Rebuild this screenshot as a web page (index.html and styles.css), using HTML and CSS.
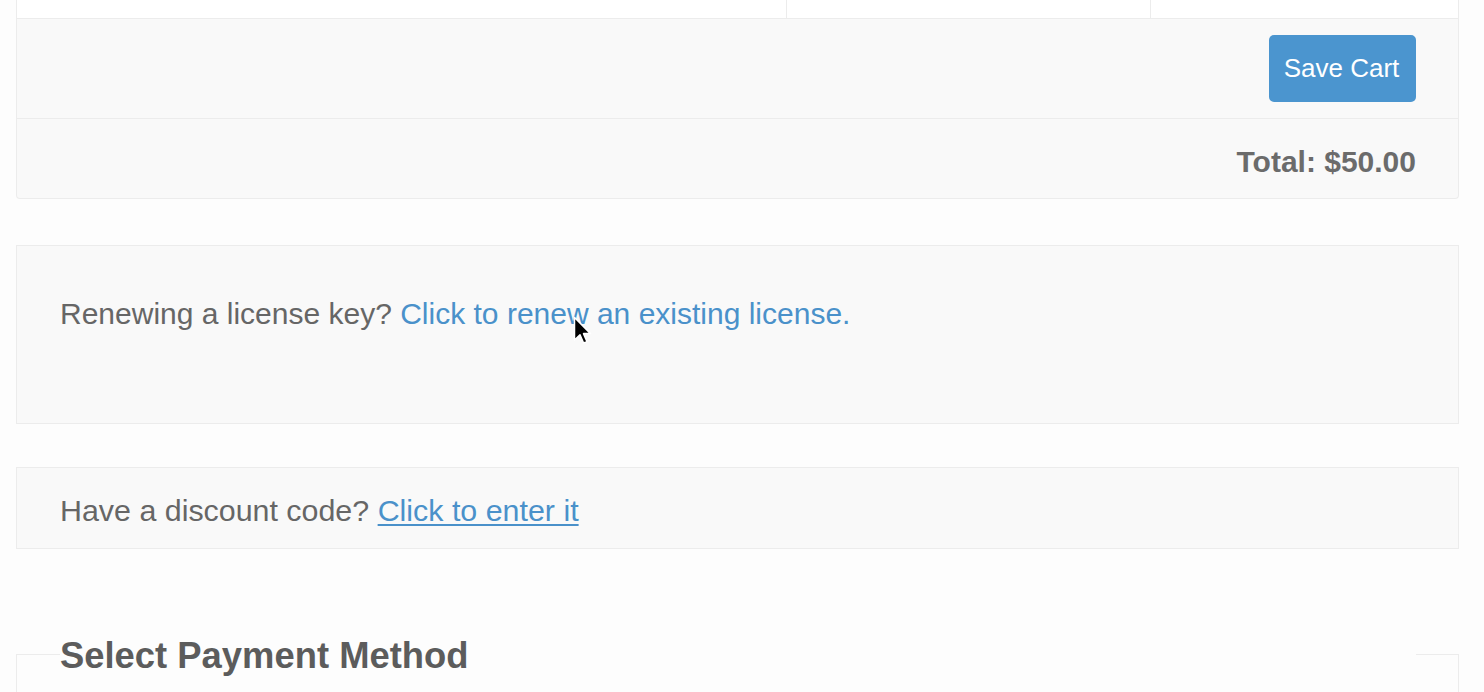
FILE: index.html
```html
<!DOCTYPE html>
<html lang="en">
<head>
<meta charset="utf-8">
<title>Checkout</title>
<link rel="stylesheet" href="styles.css">
</head>
<body>
<div class="page">
  <div class="cart">
    <div class="cart-row cart-items">
      <div class="cell"></div>
      <div class="cell"></div>
      <div class="cell last"></div>
    </div>
    <div class="cart-row cart-actions">
      <button class="btn-save" type="button">Save Cart</button>
    </div>
    <div class="cart-row cart-total">Total: $50.00</div>
  </div>

  <div class="notice notice-renew">
    <p class="notice-text">Renewing a license key? <a class="link" href="#">Click to renew an existing license.</a></p>
  </div>

  <div class="notice notice-discount">
    <p class="notice-text">Have a discount code? <a class="link link-underline" href="#">Click to enter it</a></p>
  </div>

  <fieldset class="payment">
    <legend class="payment-title">Select Payment Method</legend>
  </fieldset>
</div>

<svg class="cursor" width="20" height="32" viewBox="0 0 20 32" aria-hidden="true">
  <path d="M1.5 1.5 L1.5 24 L7 18.8 L10.6 27 L14 25.6 L10.5 17.6 L17.5 17.6 Z" fill="#000" stroke="#fff" stroke-width="1.5" stroke-linejoin="round"/>
</svg>
</body>
</html>
```

FILE: styles.css
```css
html, body {
  margin: 0;
  padding: 0;
}
body {
  background: #fdfdfd;
  font-family: "Liberation Sans", Arial, Helvetica, sans-serif;
  color: #666666;
  overflow: hidden;
  height: 692px;
  position: relative;
}
.page {
  padding-left: 16px;
  width: 1443px;
}
.cart {
  width: 1443px;
  box-sizing: border-box;
  border: 1px solid #ececec;
  border-top: 0;
  border-radius: 0 0 4px 4px;
  background: #f9f9f9;
  overflow: hidden;
}
.cart-row {
  box-sizing: border-box;
}
.cart-row + .cart-row {
  border-top: 1px solid #ececec;
}
.cart-items {
  display: grid;
  grid-template-columns: 770px 364px 1fr;
  height: 18px;
  background: #ffffff;
}
.cell {
  border-right: 1px solid #ececec;
}
.cell.last {
  border-right: 0;
}
.cart-actions {
  height: 100px;
  display: flex;
  justify-content: flex-end;
  align-items: flex-start;
  padding: 16px 42px 0 0;
}
.btn-save {
  width: 147px;
  height: 67px;
  border: 0;
  border-radius: 5px;
  background: #4b95cf;
  color: #ffffff;
  font-family: "Liberation Sans", Arial, Helvetica, sans-serif;
  font-size: 26px;
  padding: 0 2px 0 0;
  cursor: pointer;
}
.cart-total {
  height: 80px;
  padding: 26px 42px 0 0;
  text-align: right;
  font-size: 30px;
  line-height: 33px;
  font-weight: bold;
  color: #6b6b6b;
}
.notice {
  width: 1443px;
  box-sizing: border-box;
  border: 1px solid #ececec;
  background: #f9f9f9;
}
.notice-text {
  margin: 0;
  font-size: 30px;
  line-height: 42px;
  color: #666666;
}
.notice-renew {
  margin-top: 46px;
  padding: 47px 43px 88px 43px;
}
.notice-discount {
  margin-top: 43px;
  padding: 21px 43px 17px 43px;
}
.notice-discount .notice-text {
  font-size: 30.4px;
}
.link {
  color: #4a91ca;
  text-decoration: none;
}
.link-underline {
  text-decoration: underline;
  text-decoration-thickness: 2px;
  text-underline-offset: 3px;
}
.payment {
  width: 1443px;
  box-sizing: border-box;
  margin: 82px 0 0 0;
  padding: 0;
  border: 1px solid #ececec;
  min-height: 120px;
}
.payment-title {
  margin-left: 43px;
  width: 1356px;
  box-sizing: border-box;
  padding: 4px 0 0 0;
  font-size: 36.4px;
  font-weight: bold;
  color: #5c5c5c;
  background: #fdfdfd;
}
.cursor {
  position: absolute;
  left: 573px;
  top: 316px;
}
```
